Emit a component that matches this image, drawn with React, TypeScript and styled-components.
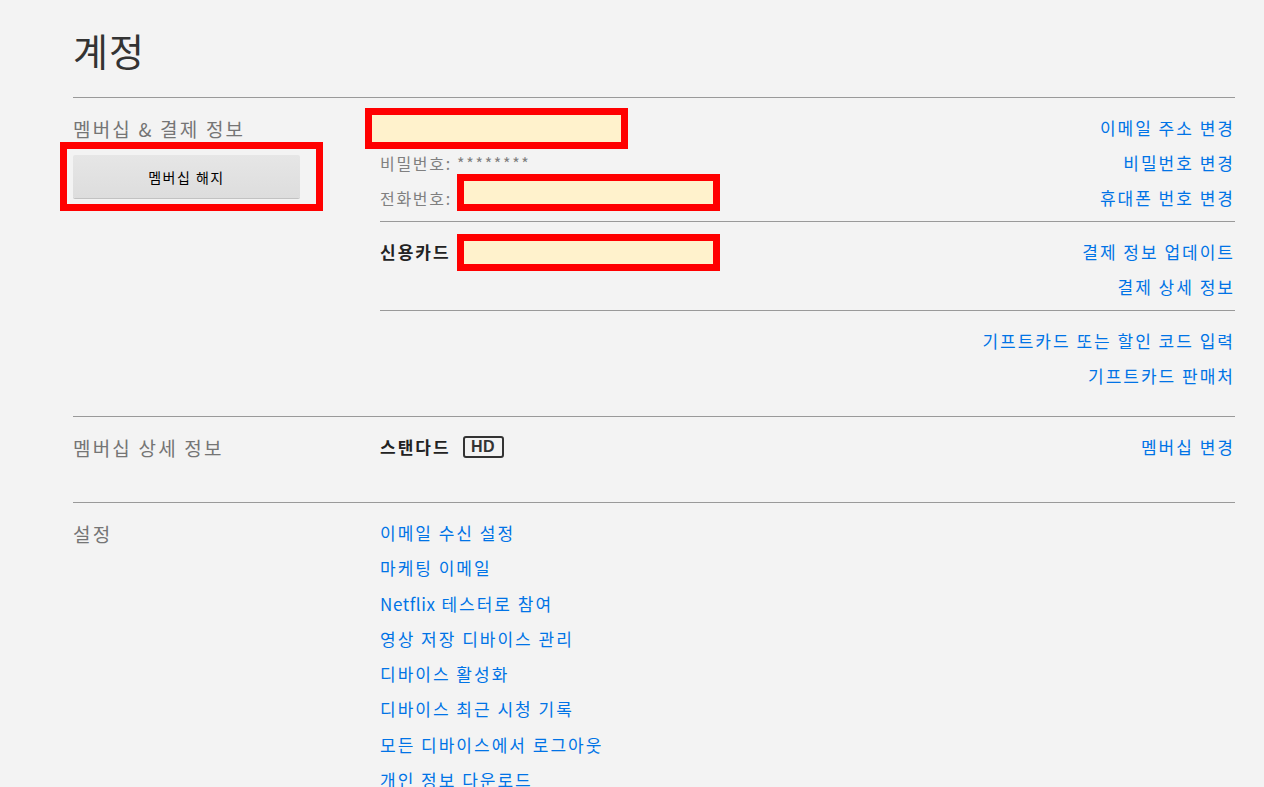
import styled, { createGlobalStyle } from 'styled-components';

const GlobalStyle = createGlobalStyle`
  html, body {
    margin: 0;
    padding: 0;
    background: #f3f3f3;
  }
  body {
    font-family: "Noto Sans CJK KR", "Noto Sans", sans-serif;
    color: #333;
  }
`;

const settingsLinks = [
  '이메일 수신 설정',
  '마케팅 이메일',
  'Netflix 테스터로 참여',
  '영상 저장 디바이스 관리',
  '디바이스 활성화',
  '디바이스 최근 시청 기록',
  '모든 디바이스에서 로그아웃',
  '개인 정보 다운로드',
];

// latin words are set tighter than the hangul around them
const renderLabel = (label: string) =>
  label.split(/([A-Za-z]+)/).map((part, i) =>
    /^[A-Za-z]+$/.test(part) ? <Latin key={i}>{part}</Latin> : part
  );

const App = () => {
  return (
    <>
      <GlobalStyle />
      <Page>
        <Title>계정</Title>

        <Section>
          <SectionHead>
            <SectionLabel>멤버십 &amp; 결제 정보</SectionLabel>
            <Highlight>
              <CancelButton>멤버십 해지</CancelButton>
            </Highlight>
          </SectionHead>
          <SectionBody>
            <Group>
              <Row>
                <Redacted $height={41} $offset={-15} $mb={-2} />
                <Link>이메일 주소 변경</Link>
              </Row>
              <Row>
                <Muted>비밀번호: ********</Muted>
                <Link>비밀번호 변경</Link>
              </Row>
              <Row>
                <Field>
                  <FieldLabel>전화번호:</FieldLabel>
                  <Redacted $height={37} $mt={-10} />
                </Field>
                <Link>휴대폰 번호 변경</Link>
              </Row>
            </Group>
            <Group>
              <Row>
                <Field>
                  <FieldLabel $bold>신용카드</FieldLabel>
                  <Redacted $height={37} $mb={-2} />
                </Field>
                <Link>결제 정보 업데이트</Link>
              </Row>
              <Row>
                <span />
                <Link>결제 상세 정보</Link>
              </Row>
            </Group>
            <Group>
              <Row>
                <span />
                <Link>기프트카드 또는 할인 코드 입력</Link>
              </Row>
              <Row>
                <span />
                <Link>기프트카드 판매처</Link>
              </Row>
            </Group>
          </SectionBody>
        </Section>

        <Section $bottom={37}>
          <SectionHead>
            <SectionLabel>멤버십 상세 정보</SectionLabel>
          </SectionHead>
          <SectionBody>
            <Row>
              <Plan>
                스탠다드
                <HdBadge>HD</HdBadge>
              </Plan>
              <Link>멤버십 변경</Link>
            </Row>
          </SectionBody>
        </Section>

        <Section>
          <SectionHead>
            <SectionLabel>설정</SectionLabel>
          </SectionHead>
          <SectionBody>
            <LinkList>
              {settingsLinks.map((label) => (
                <ListLink key={label}>{renderLabel(label)}</ListLink>
              ))}
            </LinkList>
          </SectionBody>
        </Section>
      </Page>
    </>
  );
};

export default App;

const Page = styled.div`
  width: 1162px;
  padding: 0 0 0 73px;
  min-height: 787px;
`;

const Title = styled.h1`
  margin: 0;
  padding: 26px 0 23px;
  font-size: 38px;
  line-height: 48px;
  font-weight: 400;
  letter-spacing: 1px;
  color: #333;
`;

const Section = styled.section<{ $bottom?: number }>`
  display: grid;
  grid-template-columns: 307px 1fr;
  border-top: 1px solid #999;
  padding-bottom: ${(p) => p.$bottom ?? 23}px;
`;

const SectionHead = styled.div`
  padding-top: 13px;
`;

const SectionLabel = styled.h2`
  margin: 0;
  font-size: 19px;
  line-height: 35px;
  font-weight: 400;
  letter-spacing: 2.2px;
  color: #757575;
`;

const Highlight = styled.div`
  width: fit-content;
  margin: -4px 0 0 -13px;
  padding: 6px 16px 6px 6px;
  border: 7px solid #ff0000;
`;

const CancelButton = styled.button`
  display: block;
  width: 227px;
  height: 43px;
  border: none;
  border-radius: 2px;
  background: linear-gradient(to bottom, #e6e6e6, #dddddd);
  box-shadow: 0 1px 0 rgba(0, 0, 0, 0.2);
  font-family: "Noto Sans CJK KR", "Noto Sans", sans-serif;
  font-size: 14px;
  letter-spacing: 1.5px;
  color: #000;
  cursor: pointer;
`;

const SectionBody = styled.div`
  padding-top: 12px;
`;

const Group = styled.div`
  padding-bottom: 6px;

  & + & {
    border-top: 1px solid #999;
    padding-top: 12px;
  }

  &:last-child {
    padding-bottom: 0;
  }
`;

const Row = styled.div`
  display: flex;
  justify-content: space-between;
  align-items: center;
  height: 35px;
  font-size: 17px;
  letter-spacing: 2px;
`;

const Link = styled.a`
  color: #0073e6;
  text-decoration: none;
  cursor: pointer;
`;

const Latin = styled.span`
  letter-spacing: 0.6px;
`;

const Muted = styled.span`
  font-size: 16px;
  letter-spacing: 1.7px;
  color: #808080;
`;

const Field = styled.div`
  display: flex;
  align-items: center;
`;

const FieldLabel = styled.span<{ $bold?: boolean }>`
  width: 77px;
  font-size: ${(p) => (p.$bold ? 17 : 16)}px;
  letter-spacing: ${(p) => (p.$bold ? 2 : 1.7)}px;
  color: ${(p) => (p.$bold ? '#222' : '#808080')};
  font-weight: ${(p) => (p.$bold ? 700 : 400)};
`;

const Redacted = styled.div<{ $height: number; $offset?: number; $mt?: number; $mb?: number }>`
  box-sizing: border-box;
  width: 263px;
  height: ${(p) => p.$height}px;
  margin: ${(p) => p.$mt ?? 0}px 0 ${(p) => p.$mb ?? 0}px ${(p) => p.$offset ?? 0}px;
  border: 7px solid #ff0000;
  background: #fff2cc;
`;

const Plan = styled.span`
  display: flex;
  align-items: center;
  font-weight: 700;
  color: #222;
`;

const HdBadge = styled.span`
  box-sizing: border-box;
  display: inline-flex;
  align-items: center;
  justify-content: center;
  width: 41px;
  height: 22px;
  margin-left: 12px;
  border: 2px solid #333;
  border-radius: 3px;
  font-family: "Liberation Sans", Arial, sans-serif;
  font-size: 16px;
  font-weight: 700;
  letter-spacing: 0.5px;
  color: #333;
`;

const LinkList = styled.div`
  display: flex;
  flex-direction: column;
`;

const ListLink = styled(Link)`
  font-size: 17px;
  line-height: 35.3px;
  letter-spacing: 2px;
`;
